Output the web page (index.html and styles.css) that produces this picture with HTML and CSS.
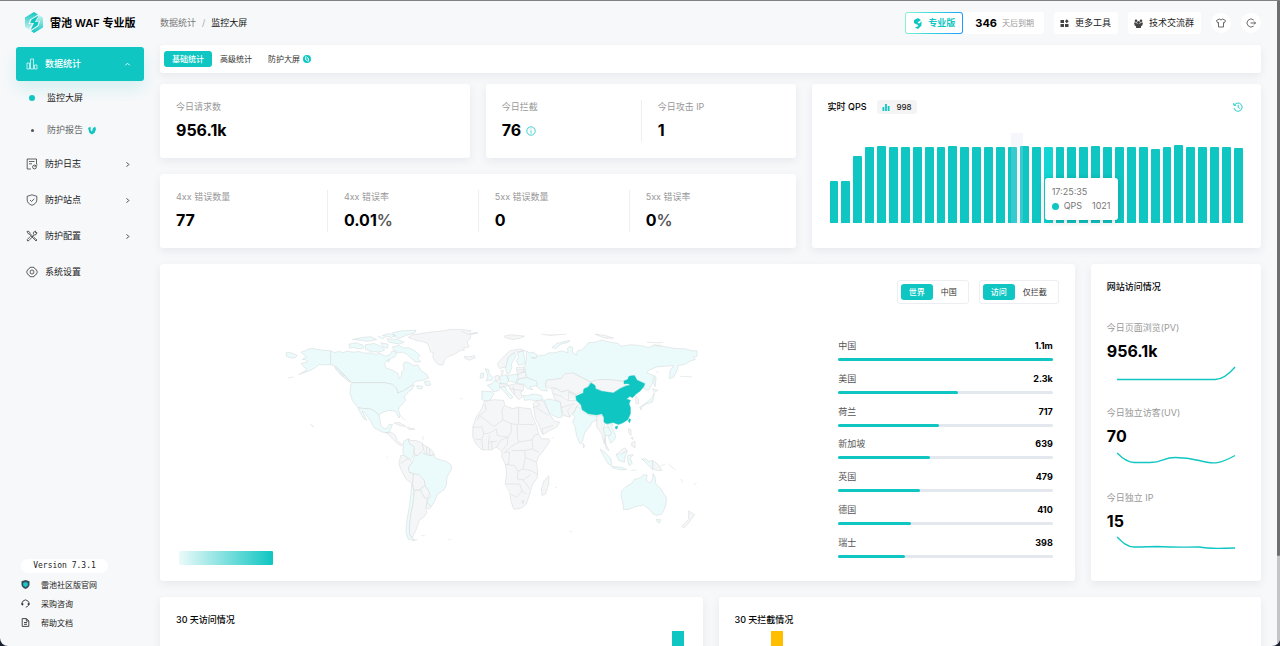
FILE: index.html
```html
<!DOCTYPE html>
<html lang="zh-CN">
<head>
    <meta charset="UTF-8">
    <meta name="viewport" content="width=device-width, initial-scale=1.0">
    <title>雷池 WAF 专业版</title>
    <link rel="stylesheet" href="styles.css">
</head>
<body>
<div class="layout">
    <aside class="sidebar">
        <div class="brand">
            <svg class="brand-logo" viewBox="0 0 18 21">
                <defs>
                    <linearGradient id="logo-light" x1="0" y1="0" x2="0" y2="1"><stop offset="0" stop-color="#0fc6c2"/><stop offset="1" stop-color="#c9f3f1"/></linearGradient>
                    <linearGradient id="logo-dark" x1="0" y1="0" x2="0" y2="1"><stop offset="0" stop-color="#c9f3f1"/><stop offset="1" stop-color="#0fc6c2"/></linearGradient>
                </defs>
                <path fill="url(#logo-light)" d="M9 0 13 2.500 5 7.500 3.500 12 7 12 4 17.500 0 15V5.500z"/>
                <path fill="url(#logo-dark)" d="M14 3 18 5.500V15.500L9 21 6 19 13.500 14 15 9 11.500 9z"/>
                <path fill="#0fc6c2" d="M13.500 3.500 6.500 7.500 5 11.300 9 11 5.500 18 12.500 13.500 13.800 9.500 10 10z"/>
            </svg>
            <span>雷池 WAF 专业版</span>
        </div>

        <nav class="menu">
            <a class="menu-item active" href="#">
                <svg class="icon" viewBox="0 0 12 12"><path d="M1 5h2.500v6H1zM4.500 1h3v10h-3zM8.500 7H11v4H8.500z"/></svg>
                <span>数据统计</span>
                <svg class="arrow" viewBox="0 0 8 8"><path d="M1.500 5 4 2.500 6.500 5"/></svg>
            </a>
            <a class="menu-sub current" href="#"><i class="dot"></i><span>监控大屏</span></a>
            <a class="menu-sub" href="#"><i class="dot"></i><span>防护报告</span>
                <svg class="pro-leaf" viewBox="0 0 9 9"><path d="M0 1.500 3 .5 3 4 4.500 6 5.500 2 8 0 9 3 7.500 7 4.500 9 1.500 7z"/></svg>
            </a>
            <a class="menu-item" href="#">
                <svg class="icon" viewBox="0 0 12 12"><path d="M5 11H1.200V1h9.300v5M3 3.500h5.500M3 5.800h3"/><circle cx="8.500" cy="9" r="1.900"/><path d="M8.500 9 10.500 6.800H11.500"/></svg>
                <span>防护日志</span>
                <svg class="arrow" viewBox="0 0 8 8"><path d="M3 1.500 5.500 4 3 6.500"/></svg>
            </a>
            <a class="menu-item" href="#">
                <svg class="icon" viewBox="0 0 12 12"><path d="M6 .8 10.800 2.300V6c0 2.500-2 4.300-4.800 5.300C3.200 10.300 1.200 8.500 1.200 6V2.300zM4 6l1.500 1.500L8.300 4.800"/></svg>
                <span>防护站点</span>
                <svg class="arrow" viewBox="0 0 8 8"><path d="M3 1.500 5.500 4 3 6.500"/></svg>
            </a>
            <a class="menu-item" href="#">
                <svg class="icon" viewBox="0 0 12 12"><path d="M1 1.500 2 1 4 2.500V3.500L8 7.500 11 10 10 11 7 8 3.500 4.300 2.500 4zM7.500 4.500 7.300 2.500 9.500 1 9.300 2.700 11 2.600 10 4.700 8 5 3 10.500 1.500 11 1.300 9.500 4.500 6.300"/></svg>
                <span>防护配置</span>
                <svg class="arrow" viewBox="0 0 8 8"><path d="M3 1.500 5.500 4 3 6.500"/></svg>
            </a>
            <a class="menu-item" href="#">
                <svg class="icon" viewBox="0 0 12 12"><path d="M4 1.300h4l.8 1.500 1.600.9L11.300 6l-.9 2.300-1.600.9L8 10.700H4l-.8-1.500-1.600-.9L.7 6l.9-2.300 1.600-.9z"/><circle cx="6" cy="6" r="2"/><path d="M6 6h.2"/></svg>
                <span>系统设置</span>
            </a>
        </nav>

        <div class="side-footer">
            <div class="version">Version 7.3.1</div>
            <a href="#"><svg class="small-icon" viewBox="0 0 9 9"><path fill="#31505a" d="M4.500 0 8.500 1.200V4.500C8.500 6.800 6.500 8.300 4.500 9 2.500 8.300.5 6.800.5 4.500V1.200z"/><path fill="#1fc5c1" d="M4.500 2 6.800 3v2.500L4.500 7.300 2.200 5.500V3z"/></svg>雷池社区版官网</a>
            <a href="#"><svg class="small-icon line" viewBox="0 0 9 9"><path d="M1.600 6.500A3.500 3.500 0 1 1 7.500 6.300Q6.500 8 4.800 8.200" /><path stroke-width="1.800" d="M1.400 4.200v1.800M7.600 4.200v1.800"/></svg>采购咨询</a>
            <a href="#"><svg class="small-icon line" viewBox="0 0 9 9"><path d="M1.200.6h4.300L7.800 3v5.400H1.200zM5.300.8V3h2.300M3 4.500h3M3 6.300h3"/></svg>帮助文档</a>
        </div>
    </aside>

    <main class="main">
        <header class="topbar">
            <div class="breadcrumb">
                <a href="#">数据统计</a><span class="sep">/</span><b>监控大屏</b>
            </div>
            <div class="actions">
                <div class="license">
                    <button class="edition">
                        <svg viewBox="0 0 10 11"><path d="M5 0 8 2 4.500 4.500 6 5.500 3.500 6.500 1 5V2zM8.500 3v4.500L5 11 2 9.500 5.500 8 4 6.500 7 5z"/></svg>
                        专业版
                    </button>
                    <div class="expire"><b>346</b><span>天后到期</span></div>
                </div>
                <button class="tool">
                    <svg viewBox="0 0 9 9"><path d="M.5 1h3.500v3H.5zM.5 5h3.500v3H.5zM5 5h3.500v3H5zM6.800.3 8.700 2.300 6.800 4.300 4.900 2.300z"/></svg>
                    更多工具
                </button>
                <button class="tool">
                    <svg viewBox="0 0 9 9"><circle cx="2" cy="1.800" r="1.300"/><circle cx="7" cy="1.800" r="1.300"/><circle cx="4.500" cy="3.500" r="1.500"/><path d="M0 3.500h2.500L3 5h3l.5-1.500H9L8.300 6.500 7.200 7 6.800 9H2.200L1.800 7 .7 6.500z"/></svg>
                    技术交流群
                </button>
                <button class="round" aria-label="主题">
                    <svg viewBox="0 0 10 10"><path d="M3.300 1 5 2 6.700 1 9.500 2.500 8.500 4.800 7.500 4.500V9h-5V4.500L1.500 4.800.5 2.500z"/></svg>
                </button>
                <button class="round" aria-label="退出">
                    <svg viewBox="0 0 10 10"><path d="M7.700 2A4 4 0 1 0 7.700 8M4.500 5h5M8 3.500 9.500 5 8 6.500"/></svg>
                </button>
            </div>
        </header>

        <div class="tabs card">
            <button class="tab on">基础统计</button>
            <button class="tab">高级统计</button>
            <button class="tab">防护大屏
                <svg viewBox="0 0 8 8"><circle cx="4" cy="4" r="4" fill="#0fc6c2"/><path d="M3 1.200 2.500 4.500 4 5.500M5 6.800 5.500 3.500 4 2.500" fill="none" stroke="#fff"/></svg>
            </button>
        </div>

        <div class="grid">
            <div class="stats">
                <section class="card stat-row">
                    <div class="stat"><p class="label">今日请求数</p><p class="number">956.1k</p></div>
                </section>
                <section class="card stat-row">
                    <div class="stat"><p class="label">今日拦截</p><p class="number">76
                        <svg class="info" viewBox="0 0 10 10"><circle cx="5" cy="5" r="4.200"/><path d="M5 2.600v.8M5 4.500v3"/></svg></p></div>
                    <div class="stat"><p class="label">今日攻击 IP</p><p class="number">1</p></div>
                </section>
                <section class="card stat-row wide">
                    <div class="stat"><p class="label">4xx 错误数量</p><p class="number">77</p></div>
                    <div class="stat"><p class="label">4xx 错误率</p><p class="number">0.01<span>%</span></p></div>
                    <div class="stat"><p class="label">5xx 错误数量</p><p class="number">0</p></div>
                    <div class="stat"><p class="label">5xx 错误率</p><p class="number">0<span>%</span></p></div>
                </section>
            </div>

            <section class="card qps">
                <div class="qps-head">
                    <h2>实时 QPS</h2>
                    <span class="chip"><svg viewBox="0 0 8 8"><path d="M.5 4h1.800v4H.5zM3.100 1h1.800v7H3.100zM5.700 3h1.800v5H5.700z"/></svg>998</span>
                    <svg class="history" viewBox="0 0 10 10"><path d="M1.500 3A4.100 4.100 0 1 1 1 6M.8 1v2.300h2.300M5.200 2.800V5.300L6.800 6.500"/></svg>
                </div>
                <div class="qps-chart">
                    <i style="height:47%"></i><i style="height:47%"></i><i style="height:74%"></i><i style="height:85%"></i><i style="height:86%"></i>
                    <i style="height:85%"></i><i style="height:85%"></i><i style="height:85%"></i><i style="height:85%"></i><i style="height:85%"></i>
                    <i style="height:86%"></i><i style="height:84%"></i><i style="height:85%"></i><i style="height:84%"></i><i style="height:85%"></i>
                    <i style="height:85%"></i><i style="height:86%"></i><i style="height:84%"></i><i class="hot" style="height:85%"></i><i style="height:85%"></i>
                    <i style="height:85%"></i><i style="height:84%"></i><i style="height:86%"></i><i style="height:84%"></i><i style="height:85%"></i>
                    <i style="height:84%"></i><i style="height:85%"></i><i style="height:82%"></i><i style="height:84%"></i><i style="height:87%"></i>
                    <i style="height:85%"></i><i style="height:85%"></i><i style="height:85%"></i><i style="height:84%"></i><i style="height:83%"></i>
                    <div class="cursor-band"></div>
                    <div class="tooltip">
                        <div>17:25:35</div>
                        <div class="tooltip-row"><span class="tooltip-dot"></span><span>QPS</span><span class="tooltip-value">1021</span></div>
                    </div>
                </div>
            </section>

            <section class="card world">
                <div class="switches">
                    <div class="switch"><button class="on">世界</button><button>中国</button></div>
                    <div class="switch"><button class="on">访问</button><button>仅拦截</button></div>
                </div>
                <div class="world-body">
                    <div class="map">
                        <svg viewBox="0 0 640 260" preserveAspectRatio="xMinYMin meet">
                            <!-- Americas -->
                            <g transform="translate(94 16) scale(.3333)">
                                <g class="has">
                                    <path d="M92 96 104 92 112 87 125 85 150 89 180 92 192 97 205 94 218 97 230 93 248 96 265 94 282 99 300 98 315 103 325 99 345 108 358 103 364 92 378 97 372 110 350 120 341 130 345 143 365 150 380 158 386 175 392 168 392 155 400 148 397 132 402 125 415 128 430 137 440 134 450 150 468 163 473 174 455 180 435 183 425 192 418 198 402 208 396 212 380 218 378 205 365 192 340 187 245 187 235 180 225 168 212 155 204 148 195 138 180 133 160 134 145 133 135 142 115 152 85 163 110 148 98 138 92 130 112 125 106 119 95 118 108 110zM180 92V133"/>
                                    <path d="M47 98 60 97 80 105 75 113 60 113 48 108z"/>
                                    <path d="M245 187H340L365 192 378 205 380 218 396 212 418 198 430 193 425 205 415 213 400 228 404 240 385 262 383 270 388 285 385 293 378 280 372 272 355 270 345 273 330 278 325 285 312 272 300 266 275 264 262 262 245 240 238 220 240 195z"/>
                                    <path d="M262 262 275 264 300 266 312 272 325 285 328 300 330 315 340 325 350 322 355 312 365 312 360 325 352 338 335 335 310 322 300 302 285 280 275 272 288 300 280 296 268 275z"/>
                                    <path d="M398 362 412 355 416 370 430 378 427 405 418 418 400 405 396 395z"/>
                                    <path d="M430 405 440 405 450 395 465 402 484 405 490 400 492 412 510 418 525 422 540 432 542 445 528 470 526 495 518 508 498 522 492 540 480 558 468 545 478 525 470 505 462 495 460 480 440 465 428 458 412 455 412 440 425 425z"/>
                                    <path d="M423 490 430 510 428 540 420 580 415 620 418 645 432 658 412 655 405 635 408 600 415 560 420 520z"/>
                                    <path d="M235 72 255 68 275 74 280 84 262 86 248 82 236 84zM283 74 310 70 330 78 342 90 325 96 300 94 285 88zM245 58 275 52 300 50 318 58 290 64 270 60zM330 68 352 72 350 84 338 82zM335 46 355 40 375 46 362 52zM365 38 395 32 435 30 432 38 405 46 385 55 372 50zM365 80 385 76 400 84 412 82 432 92 448 106 440 114 450 124 435 126 418 112 410 104 395 96 380 98 370 90zM348 56 380 58 400 66 385 72 355 66zM320 48 335 56 345 50M345 122 358 118 352 128"/>
                                    <path d="M460 184 475 182 480 194 465 196zM437 196 455 198 452 206 440 204zM192 140 222 166 216 168 198 150zM196 138 240 186 234 184 205 158"/>
                                </g>
                                <g class="none">
                                    <path d="M412 52 425 44 440 42 480 36 510 33 540 28 570 28 600 32 590 37 620 38 598 44 598 54 588 65 594 80 578 83 580 90 570 90 550 102 530 110 520 120 515 135 500 132 490 120 485 108 488 98 478 95 475 82 470 70 455 64 440 62z"/>
                                    <path d="M580 108 595 110 610 106 612 113 595 120 582 115z"/>
                                    <path d="M345 335 352 338 360 334 375 345 378 360 395 372 392 376 380 370 370 360 360 350z"/>
                                    <path d="M412 355 420 360 435 360 455 368 458 385 450 395 440 405 430 400 430 378 416 370z"/>
                                    <path d="M455 372 475 382 488 395 484 405 470 402 460 398zM466 378 468 402M476 384 476 402"/>
                                    <path d="M390 405 400 405 418 418 425 425 412 440 415 455 428 462 425 490 405 475 392 450 384 430zM390 428 402 420 412 414"/>
                                    <path d="M428 460 445 462 460 480 462 495 448 505 430 510 425 490z"/>
                                    <path d="M450 502 462 495 476 515 470 535 460 530 450 515z"/>
                                    <path d="M468 545 480 558 475 565 464 562z"/>
                                    <path d="M430 510 448 508 460 530 470 535 464 562 468 575 460 588 445 598 440 615 432 635 424 650 416 640 416 610 420 580 428 540z"/>
                                    <path d="M370 308 385 306 405 318 390 316zM408 320 432 326 415 328zM388 285 395 292 402 300M118 310 130 318 128 320M52 174 70 170M348 408 352 413M452 644 462 645M532 655 540 658M568 234 575 236M456 346 456 358M424 660 440 656"/>
                                </g>
                            </g>
                            <!-- Europe, Africa, Asia, Oceania -->
                            <g transform="translate(284 16) scale(.3333)">
                                <g class="has">
                                    <path d="M195 92 205 98 215 96 228 104 225 112 210 112 218 116 235 105 248 106 262 98 280 98 300 92 320 98 318 85 325 78 334 82 332 96 345 104 348 92 360 90 370 80 380 68 400 66 420 60 445 66 470 70 478 78 505 74 530 75 560 82 575 76 600 78 640 85 670 86 690 92 705 92 705 108 695 110 700 118 685 122 670 132 648 136 648 145 635 172 622 175 625 150 636 136 610 138 585 140 560 150 555 158 575 165 572 190 560 210 545 205 549 192 526 180 510 166 495 180 480 182 440 178 415 178 388 186 360 170 335 158 310 165 298 175 255 180 252 195 258 212 240 210 222 195 215 180 195 170 190 140 195 120z"/>
                                    <path d="M272 82 285 70 325 60 322 66 298 72 282 85zM578 165 583 172 580 200 576 190z"/>
                                    <path d="M248 240 262 236 280 240 297 245 302 290 290 292 275 285 262 275z"/>
                                    <path d="M185 225 200 226 215 221 240 225 245 238 225 242 205 238 190 240z"/>
                                    <path d="M345 258 358 265 365 275 385 285 410 288 405 300 392 305 385 318 370 335 362 365 355 370 345 345 340 315 333 305 340 290 335 282z"/>
                                    <path d="M425 320 440 320 450 335 445 345 432 345 432 370 442 390 434 385 428 360z"/>
                                    <path d="M435 310 455 310 450 320 462 345 460 355 448 368 440 350 450 338z"/>
                                    <path d="M415 385 430 395 448 415 450 435 440 430 428 410zM450 437 480 440 495 447 480 448 452 442zM463 402 480 400 490 388 496 392 490 410 488 425 472 420zM540 415 552 415 560 422 573 420 573 448 558 432zM498 405 515 402 505 412 512 428 502 435 498 420z"/>
                                    <path d="M480 510 490 500 510 488 518 476 535 472 545 462 556 464 553 478 565 488 572 474 574 458 580 470 582 490 598 505 606 520 614 530 612 552 606 568 600 580 585 584 572 578 565 568 558 562 545 553 520 558 500 566 485 566 484 548 478 525zM584 595 597 597 592 607 586 603z"/>
                                    <path d="M62 212 90 214 98 220 88 238 75 242 62 238zM78 195 92 190 100 180 115 188 115 205 110 212 95 214 90 204zM72 145 82 148 84 160 95 172 92 180 75 182 80 168zM58 160 68 158 66 172 57 174z"/>
                                    <path d="M115 168 135 163 142 180 135 192 118 190zM138 165 170 162 172 178 165 188 142 182zM115 200 130 198 140 215 155 230 148 236 130 215zM165 178 195 172 225 182 228 195 205 200 215 208 198 205 188 192 168 190z"/>
                                    <path d="M132 145 140 112 160 98 165 105 150 132 152 142 145 158 137 160zM168 98 185 92 190 115 192 130 172 135 165 122 172 110z"/>
                                    <path d="M572 205 588 210 578 216zM577 218 576 232 572 245 555 250 540 260 538 268 534 260 558 244 570 232z"/>
                                </g>
                                <g class="none">
                                    <path d="M255 180 298 175 310 160 335 158 360 172 388 186 375 200 360 215 343 222 318 210 300 215 285 205 272 200 265 205 252 195z"/>
                                    <path d="M388 186 400 180 415 178 440 178 490 184 490 195 475 205 455 218 430 215 408 205z"/>
                                    <path d="M270 205 285 205 300 215 318 210 343 222 345 240 358 252 345 258 340 270 325 290 305 285 300 262 297 245 280 238 275 222zM275 220 300 228 320 240 345 240M300 262 320 255 340 250M320 240 322 215 343 228M325 290 318 270 330 258"/>
                                    <path d="M215 250 225 240 245 240 262 275 272 292 280 302 295 305 285 320 265 330 245 342 238 330 232 312 222 295zM225 262 245 275 262 285M245 342 242 325 275 315M225 240 235 255 215 262"/>
                                    <path d="M405 290 415 283 427 290 430 310 425 325 430 345 428 370 420 340 405 318z"/>
                                    <path d="M70 243 85 240 100 238 128 240 130 255 155 265 170 260 188 263 208 265 212 285 225 315 232 340 240 355 262 355 265 362 250 385 232 408 225 425 229 450 228 470 212 495 205 520 195 550 180 562 158 566 150 545 145 515 132 490 136 455 132 430 122 410 122 392 105 380 90 388 62 388 45 372 35 350 35 320 45 290 60 268z"/>
                                    <path d="M128 258 122 270 125 298 150 310 168 312M172 262V312H218M72 250 75 270 55 285 48 300M55 285 98 318 125 298M35 320H62L68 340 85 338 105 325M68 340 62 358 42 355M105 325 108 345 140 350 150 335 150 310M85 345 82 365 108 362M168 312 168 345 172 365 212 358 218 345 232 340M140 350 138 372 125 388M172 365 150 378 130 395H145L142 430 132 432M150 390 190 390 192 410 185 445 170 452 160 435 135 432M190 390 212 385 232 395M212 358 215 385M192 410 225 425M185 445 208 450 228 460M170 452 168 475 185 478 208 462M132 490 175 490 182 512 165 530 148 520M185 478 195 490 205 505M182 512 195 520M182 540 188 540 186 548 182 546zM62 358 65 388M82 365V388M92 362V387M140 350 120 358 105 380"/>
                                    <path d="M262 465 262 490 252 520 242 524 240 505 247 482z"/>
                                    <path d="M140 195 165 190 188 195 185 212 178 215 183 230 172 238 165 230 150 212zM145 205 165 208 183 212M155 198 160 225M168 165 190 152 196 170 172 176zM165 142 188 140 188 155 168 160zM165 150 188 148"/>
                                    <path d="M108 130 122 115 145 92 175 86 192 92 165 95 150 102 140 112 134 140 115 145zM118 152 126 150 124 162 118 164M100 168 112 165 115 178 104 182zM115 190 138 192 140 197 118 200"/>
                                    <path d="M520 225 530 235 531 250 523 250zM500 325 508 328 508 345 502 340zM508 352 514 350 513 358zM510 366 520 362 520 382 510 376zM463 402 480 388 490 382 498 390 480 400M364 368 370 375 366 382z"/>
                                    <path d="M573 420 590 432 600 450 588 450 573 445zM598 436 610 430M620 430 640 448M680 570 698 582 688 596 680 592zM680 596 686 600 665 622 660 617 668 608zM656 475 664 485M696 492 704 486M508 450 525 448M272 352 276 351M280 502 286 500M324 630 332 634"/>
                                    <path d="M0 32 20 42 50 38M128 48 150 44 190 48 175 55 155 58 130 52M240 42 265 46 315 42M400 42 430 46 455 54 430 54zM555 66 590 68 605 66M575 74 600 76M655 168 690 170M582 152 590 158"/>
                                </g>
                                <path class="top" d="M388 188 400 195 402 205 420 213 455 218 475 205 495 196 505 195 500 190 487 190 487 182 498 178 502 168 518 166 526 180 549 190 545 200 535 212 522 222 512 232 505 228 494 236 506 240 502 250 506 262 506 280 498 298 482 308 470 312 455 306 435 310 427 305 427 290 420 280 405 284 380 280 362 268 358 252 345 240 343 228 365 218 367 206 380 200zM503 295 507 297 503 307 500 302zM461 319 468 317 466 325 462 325z"/>
                            </g>
                        </svg>
                        <div class="legend"></div>
                    </div>

                    <ul class="rank">
                        <li><span>中国</span><b>1.1m</b><div class="track"><i style="width:100%"></i></div></li>
                        <li><span>美国</span><b>2.3k</b><div class="track"><i style="width:56%"></i></div></li>
                        <li><span>荷兰</span><b>717</b><div class="track"><i style="width:47%"></i></div></li>
                        <li><span>新加坡</span><b>639</b><div class="track"><i style="width:43%"></i></div></li>
                        <li><span>英国</span><b>479</b><div class="track"><i style="width:38%"></i></div></li>
                        <li><span>德国</span><b>410</b><div class="track"><i style="width:34%"></i></div></li>
                        <li><span>瑞士</span><b>398</b><div class="track"><i style="width:31%"></i></div></li>
                    </ul>
                </div>
            </section>

            <section class="card visits">
                <h2>网站访问情况</h2>
                <div class="visit">
                    <p class="label">今日页面浏览(PV)</p><p class="number">956.1k</p>
                    <svg viewBox="0 0 138 24"><path d="M10 17.500H108C116 17.500 122 12 128 5"/></svg>
                </div>
                <div class="visit">
                    <p class="label">今日独立访客(UV)</p><p class="number">70</p>
                    <svg viewBox="0 0 138 24"><path d="M10 6C15 11 20 15.500 27 15.500H43C56 15.500 56 10.500 68 10.500 80 10.500 86 12 92 13.500 108 18 113 16.500 128 8.500"/></svg>
                </div>
                <div class="visit">
                    <p class="label">今日独立 IP</p><p class="number">15</p>
                    <svg viewBox="0 0 138 24"><path d="M10 5C15 10 20 15 27 15 45 15 35 14.500 50 14.500 70 15.500 75 15 92 15 102 17 105 16.500 128 16"/></svg>
                </div>
            </section>

            <section class="card month">
                <h2>30 天访问情况</h2>
                <div class="month-chart"><i style="grid-column:30"></i></div>
            </section>
            <section class="card month">
                <h2>30 天拦截情况</h2>
                <div class="month-chart block"><i style="grid-column:3"></i></div>
            </section>
        </div>
    </main>
    <div class="scroll"><div class="scroll-thumb"></div></div>
</div>
</body>
</html>
```
FILE: styles.css
```css
* {
    box-sizing: border-box;
}

html {
    background: #1b2130;
}

body {
    margin: 0;
    font-family: Inter, "Noto Sans CJK SC", sans-serif;
    font-size: 9px;
    line-height: 14px;
    color: #222;
}

h2, p, ul {
    margin: 0;
    padding: 0;
}

h2 {
    font-size: 9px;
    font-weight: 500;
    color: #000;
}

a {
    color: inherit;
    text-decoration: none;
}

button {
    font: inherit;
    color: inherit;
    border: none;
    background: none;
    padding: 0;
    cursor: pointer;
}

svg {
    display: block;
    flex: none;
}

.layout {
    display: flex;
    height: 100vh;
    overflow: hidden;
    background: #f7f8fa;
    border-top: 1px solid #808184;
    border-radius: 0 0 8px 8px;
}

.card {
    background: #fff;
    border-radius: 3px;
    box-shadow: 0 3px 8px rgba(40, 60, 90, 0.08);
}

/* sidebar */
.sidebar {
    flex: none;
    width: 160px;
    padding: 0 16px;
    display: flex;
    flex-direction: column;
}

.brand {
    display: flex;
    align-items: center;
    gap: 7px;
    height: 43px;
    margin-bottom: 2px;
    padding-left: 9px;
    font-size: 11px;
    font-weight: 600;
    color: #000;
    white-space: nowrap;
}

.brand-logo {
    width: 18px;
    height: 21px;
}

.menu-item {
    display: flex;
    align-items: center;
    height: 34px;
    margin: 1px 0 2px;
    padding: 0 13px 0 10px;
    border-radius: 3px;
}

.menu-item.active {
    margin-bottom: 1px;
    background: #0fc6c2;
    color: #fff;
    font-weight: 500;
    box-shadow: 0 8px 16px rgba(15, 198, 194, 0.14);
}

.icon {
    width: 12px;
    height: 12px;
    margin-right: 7px;
    fill: none;
    stroke: currentColor;
    stroke-width: 0.7;
}

.arrow {
    width: 7px;
    height: 7px;
    margin-left: auto;
    fill: none;
    stroke: currentColor;
}

.menu-sub {
    display: flex;
    align-items: center;
    height: 32px;
    padding-left: 13px;
    color: #666;
}

.menu-sub.current {
    color: #222;
}

.dot {
    width: 3px;
    height: 3px;
    margin: 0 13px 0 2px;
    border-radius: 50%;
    background: #555;
}

.current .dot {
    width: 6px;
    height: 6px;
    margin: 0 12px 0 0;
    background: #0fc6c2;
}

.pro-leaf {
    width: 8px;
    height: 9px;
    margin-left: 5px;
    fill: #0fc6c2;
}

.side-footer {
    margin-top: auto;
    padding: 0 0 14px 5px;
    font-size: 8px;
}

.side-footer a {
    display: flex;
    align-items: center;
    height: 19px;
    gap: 11px;
}

.version {
    width: 87px;
    margin-bottom: 2px;
    border-radius: 8px;
    background: #fff;
    font-family: "DejaVu Sans Mono", monospace;
    text-align: center;
}

.small-icon {
    width: 9px;
    height: 9px;
}

.line {
    fill: none;
    stroke: #333;
    stroke-width: 0.9;
}

/* top bar */
.main {
    flex: 1;
    min-width: 0;
    padding-right: 16px;
}

.topbar {
    display: flex;
    justify-content: space-between;
    align-items: center;
    height: 44px;
}

.breadcrumb {
    display: flex;
    color: #777;
}

.breadcrumb .sep {
    margin: 0 6px;
    color: #aaa;
}

.breadcrumb b {
    font-weight: 400;
    color: #111;
}

.actions {
    display: flex;
    align-items: center;
    gap: 10px;
}

.license {
    display: flex;
    height: 22px;
    border-radius: 3px;
    background: #fff;
}

.edition {
    display: flex;
    align-items: center;
    gap: 5px;
    padding: 0 7px;
    border: 1px solid transparent;
    border-radius: 3px;
    background: linear-gradient(#fff, #fff) padding-box, linear-gradient(100deg, #8ff5d0, #2fd3dd 50%, #1e96ff) border-box;
    color: #0fc6c2;
    font-weight: 600;
}

.edition svg {
    width: 10px;
    height: 11px;
    fill: #0fc6c2;
}

.expire {
    display: flex;
    align-items: center;
    gap: 5px;
    padding: 0 10px 0 12px;
    font-size: 8px;
    color: #999;
}

.expire b {
    font-size: 11px;
    color: #000;
}

.tool {
    display: flex;
    align-items: center;
    gap: 6px;
    height: 22px;
    padding: 0 7px 0 6px;
    border-radius: 3px;
    background: #fff;
}

.tool svg {
    width: 9px;
    height: 9px;
    fill: #444;
}

.round {
    display: grid;
    place-items: center;
    width: 20px;
    height: 20px;
    border-radius: 50%;
    background: #fff;
}

.round svg {
    width: 10px;
    height: 10px;
    fill: none;
    stroke: #444;
    stroke-width: 0.8;
}

.tabs {
    display: flex;
    align-items: center;
    height: 28px;
    padding: 0 4px;
    margin-bottom: 11px;
}

.tab, .switch button {
    height: 16px;
    padding: 0 8px;
    border-radius: 3px;
    font-size: 8px;
    color: #333;
}

.tab {
    display: flex;
    align-items: center;
    gap: 3px;
}

.tab svg {
    width: 8px;
    height: 8px;
}

.tabs .on, .switch .on {
    background: #0fc6c2;
    color: #fff;
    font-weight: 500;
}

/* dashboard */
.grid {
    display: grid;
    grid-template-columns: repeat(12, 1fr);
    gap: 16px;
}

.stats {
    grid-column: span 7;
    display: grid;
    grid-template-columns: 1fr 1fr;
    gap: 16px;
}

.stat-row {
    display: grid;
    grid-auto-flow: column;
    grid-auto-columns: 1fr;
    padding: 16px;
}

.wide {
    grid-column: span 2;
}

.stat + .stat {
    padding-left: 16px;
    border-left: 1px solid #eceef1;
}

.label {
    color: #999;
    white-space: nowrap;
}

.number {
    display: flex;
    align-items: center;
    margin-top: 5px;
    font-size: 16px;
    font-weight: 700;
    line-height: 23px;
    color: #000;
}

.number span {
    font-weight: 600;
    color: #555;
}

.info {
    width: 10px;
    height: 10px;
    margin-left: 5px;
    fill: none;
    stroke: #0fc6c2;
    stroke-width: 0.8;
}

.qps {
    grid-column: span 5;
    padding: 16px;
}

.qps-head {
    display: flex;
    align-items: center;
}

.chip {
    display: flex;
    align-items: center;
    gap: 6px;
    margin-left: 11px;
    padding: 0 5px;
    border-radius: 3px;
    background: #f4f4f5;
    font-size: 8px;
    font-weight: 500;
}

.chip svg {
    width: 8px;
    height: 8px;
    fill: #0fc6c2;
}

.history {
    width: 10px;
    height: 10px;
    margin-left: auto;
    margin-right: 2px;
    fill: none;
    stroke: #0fc6c2;
    stroke-width: 0.9;
}

.qps-chart {
    position: relative;
    display: flex;
    align-items: flex-end;
    gap: 3px;
    height: 90px;
    margin-top: 19px;
    padding: 0 2px;
}

.qps-chart i {
    flex: 1;
    border-radius: 1px 1px 0 0;
    background: #0fc6c2;
}

.qps-chart .hot {
    background: #11d6d3;
}

.cursor-band {
    position: absolute;
    top: 0;
    bottom: 0;
    left: 44%;
    width: 12px;
    background: rgba(210, 220, 245, 0.22);
}

.tooltip {
    position: absolute;
    left: 52%;
    bottom: 3px;
    padding: 7px;
    border-radius: 3px;
    background: #fff;
    box-shadow: 0 1px 6px rgba(0, 0, 0, 0.2);
    color: #777;
}

.tooltip-row {
    display: flex;
    align-items: center;
}

.tooltip-dot {
    width: 7px;
    height: 7px;
    margin-right: 5px;
    border-radius: 50%;
    background: #0fc6c2;
}

.tooltip-value {
    margin-left: 10px;
}

/* world map */
.world {
    grid-column: span 10;
    padding: 16px;
}

.switches {
    display: flex;
    justify-content: flex-end;
    gap: 10px;
}

.switch {
    display: flex;
    padding: 3px;
    border: 1px solid #eceef1;
    border-radius: 3px;
}

.world-body {
    display: flex;
}

.map {
    position: relative;
    flex: 1;
    min-width: 0;
}

.map svg {
    width: 100%;
    height: 261px;
}

.map path {
    stroke: #d3d6d8;
    stroke-width: 1.5;
    stroke-linejoin: round;
}

.map .has {
    fill: #ebfafa;
}

.map .none {
    fill: #f5f6f8;
}

.map .top {
    fill: #0fc6c2;
    stroke: #0fc6c2;
}

.legend {
    position: absolute;
    left: 3px;
    bottom: 0;
    width: 94px;
    height: 14px;
    border-radius: 1px;
    background: linear-gradient(90deg, #ebfafa, #0fc6c2);
}

.rank {
    display: flex;
    flex-direction: column;
    justify-content: space-between;
    width: 25%;
    margin-right: 6px;
    padding: 35px 0 7px 6px;
    list-style: none;
}

.rank li {
    display: flex;
    flex-wrap: wrap;
    justify-content: space-between;
    row-gap: 5px;
    color: #555;
}

.rank b {
    font-weight: 700;
    color: #000;
}

.track {
    width: 100%;
    height: 3px;
    border-radius: 2px;
    background: #e3e8ef;
}

.track i {
    display: block;
    height: 3px;
    border-radius: 2px;
    background: #0fc6c2;
}

.visits {
    grid-column: span 2;
    padding: 16px;
}

.visit {
    margin-top: 20px;
}

h2 + .visit {
    margin-top: 27px;
}

.visit .number {
    line-height: 22px;
}

.visit svg {
    width: 100%;
    height: 24px;
    fill: none;
    stroke: #0fc6c2;
    stroke-width: 1.3;
}

.month {
    grid-column: span 6;
    padding: 16px;
}

.month-chart {
    display: grid;
    grid-template-columns: repeat(30, 1fr);
    height: 160px;
    margin-top: 4px;
}

.month-chart i {
    width: 12px;
    justify-self: center;
    background: #0fc6c2;
}

.month-chart.block i {
    background: #ffbf00;
}

/* page scrollbar */
.scroll {
    flex: none;
    width: 3px;
    background: #c4c5c7;
}

.scroll-thumb {
    height: 86%;
    background: #6e6f71;
    border-radius: 0 0 2px 2px;
}
```
